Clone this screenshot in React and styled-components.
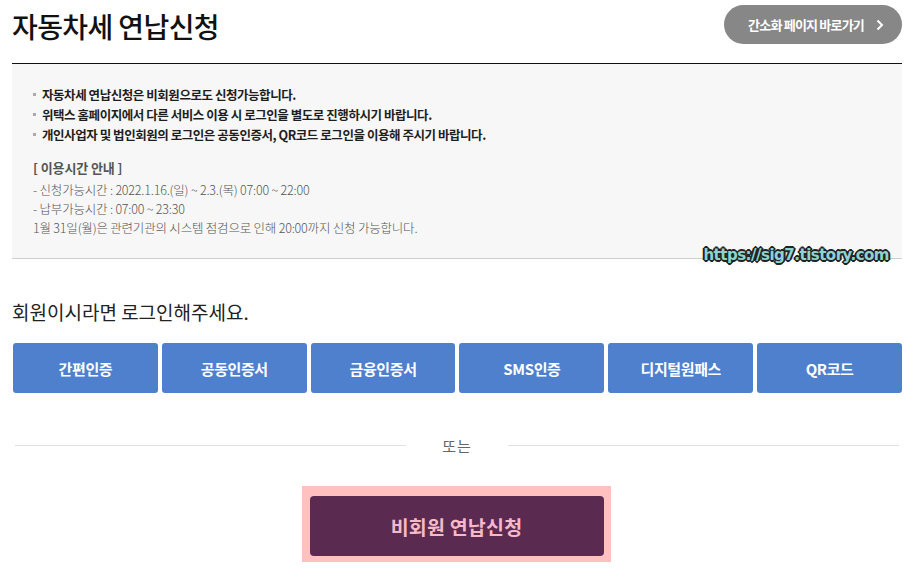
import React from "react";
import styled, { createGlobalStyle } from "styled-components";

const GlobalStyle = createGlobalStyle`
  * { box-sizing: border-box; }
  body {
    margin: 0;
    background: #fff;
    font-family: "Noto Sans CJK KR", "Noto Sans", sans-serif;
    color: #222;
  }
`;

const Page = styled.div`
  width: 911px;
  height: 583px;
  padding: 0 9px 0 12px;
  overflow: hidden;
`;

const Header = styled.div`
  display: flex;
  align-items: center;
  justify-content: space-between;
  height: 64px;
  border-bottom: 1px solid #111;
`;

const Title = styled.h1`
  margin: 0 0 12px;
  font-size: 28px;
  font-weight: 500;
  letter-spacing: -0.6px;
  color: #111;
`;

const SimpleButton = styled.button`
  display: flex;
  align-items: center;
  gap: 12px;
  height: 39px;
  padding: 0 18px 0 24px;
  margin-bottom: 14px;
  border: none;
  border-radius: 20px;
  background: #878787;
  color: #fff;
  font-family: inherit;
  font-size: 13px;
  font-weight: 700;
  letter-spacing: -0.8px;
`;

const InfoBox = styled.div`
  position: relative;
  height: 195px;
  padding: 20px 21px 0;
  background: #f7f7f7;
  border-bottom: 1px solid #cfcfcf;
`;

const BulletList = styled.ul`
  margin: 0;
  padding: 0;
  list-style: none;
`;

const Bullet = styled.li`
  display: flex;
  align-items: center;
  height: 20px;
  font-size: 12.5px;
  font-weight: 700;
  letter-spacing: -0.45px;
  color: #1e1e1e;

  &::before {
    content: "";
    width: 3px;
    height: 3px;
    margin-right: 6px;
    background: #aaa;
  }
`;

const TimeTitle = styled.div`
  margin-top: 14px;
  font-size: 13px;
  font-weight: 700;
  letter-spacing: -0.1px;
  color: #555;
  line-height: 20px;
`;

const TimeList = styled.div`
  margin-top: 2px;
`;

const TimeLine = styled.div`
  font-size: 12.5px;
  font-weight: 300;
  letter-spacing: -0.2px;
  color: #555;
  line-height: 19px;
`;

const Watermark = styled.div`
  position: absolute;
  right: 13px;
  bottom: -6px;
  font-family: "DejaVu Sans", sans-serif;
  font-size: 15px;
  font-weight: 700;
  letter-spacing: -0.5px;
  color: #8ed3cf;
  text-shadow: -2px 0 #222, 2px 0 #222, 0 -2px #222, 0 2px #222,
    -1px -1px #222, 1px 1px #222, -1px 1px #222, 1px -1px #222;
`;

const LoginText = styled.p`
  margin: 39px 0 0;
  font-size: 19px;
  font-weight: 400;
  letter-spacing: 0;
  color: #222;
`;

const AuthRow = styled.div`
  display: grid;
  grid-template-columns: repeat(6, 1fr);
  gap: 4px;
  margin-top: 18px;
  padding-left: 1px;
`;

const AuthButton = styled.button`
  height: 50px;
  border: none;
  border-radius: 3px;
  background: #4f80cd;
  color: #fff;
  font-family: inherit;
  font-size: 15px;
  font-weight: 700;
  letter-spacing: -0.4px;
`;

const Divider = styled.div`
  display: flex;
  align-items: center;
  margin: 42px 3px 0 3px;
  color: #666;
  font-size: 15px;
  letter-spacing: 1px;

  &::before,
  &::after {
    content: "";
    flex: 1;
    height: 1px;
    background: #e2e2e2;
  }
`;

const DividerText = styled.span`
  width: 102px;
  text-align: center;
`;

const GuestWrap = styled.div`
  display: flex;
  justify-content: center;
  margin-top: 30px;
  padding-right: 2px;
`;

const Highlight = styled.div`
  padding: 10px 7px 6px 8px;
  background: #ffc0c0;
`;

const GuestButton = styled.button`
  width: 294px;
  height: 60px;
  border: none;
  border-radius: 4px;
  background: #5a2a50;
  color: #f7b9c8;
  font-family: inherit;
  font-size: 19.5px;
  font-weight: 700;
  letter-spacing: 0.2px;
`;

const authList = ["간편인증", "공동인증서", "금융인증서", "SMS인증", "디지털원패스", "QR코드"];

const Chevron = () => (
  <svg width="8" height="12" viewBox="0 0 8 12" fill="none">
    <path d="M1.5 1.5L6 6l-4.5 4.5" stroke="#fff" strokeWidth="2" />
  </svg>
);

export default function App() {
  return (
    <>
      <GlobalStyle />
      <Page>
        <Header>
          <Title>자동차세 연납신청</Title>
          <SimpleButton>
            간소화 페이지 바로가기
            <Chevron />
          </SimpleButton>
        </Header>
        <InfoBox>
          <BulletList>
            <Bullet>자동차세 연납신청은 비회원으로도 신청가능합니다.</Bullet>
            <Bullet>위택스 홈페이지에서 다른 서비스 이용 시 로그인을 별도로 진행하시기 바랍니다.</Bullet>
            <Bullet>개인사업자 및 법인회원의 로그인은 공동인증서, QR코드 로그인을 이용해 주시기 바랍니다.</Bullet>
          </BulletList>
          <TimeTitle>[ 이용시간 안내 ]</TimeTitle>
          <TimeList>
            <TimeLine>- 신청가능시간 : 2022.1.16.(일) ~ 2.3.(목) 07:00 ~ 22:00</TimeLine>
            <TimeLine>- 납부가능시간 : 07:00 ~ 23:30</TimeLine>
            <TimeLine>1월 31일(월)은 관련기관의 시스템 점검으로 인해 20:00까지 신청 가능합니다.</TimeLine>
          </TimeList>
          <Watermark>https://sig7.tistory.com</Watermark>
        </InfoBox>
        <LoginText>회원이시라면 로그인해주세요.</LoginText>
        <AuthRow>
          {authList.map((label) => (
            <AuthButton key={label}>{label}</AuthButton>
          ))}
        </AuthRow>
        <Divider>
          <DividerText>또는</DividerText>
        </Divider>
        <GuestWrap>
          <Highlight>
            <GuestButton>비회원 연납신청</GuestButton>
          </Highlight>
        </GuestWrap>
      </Page>
    </>
  );
}
